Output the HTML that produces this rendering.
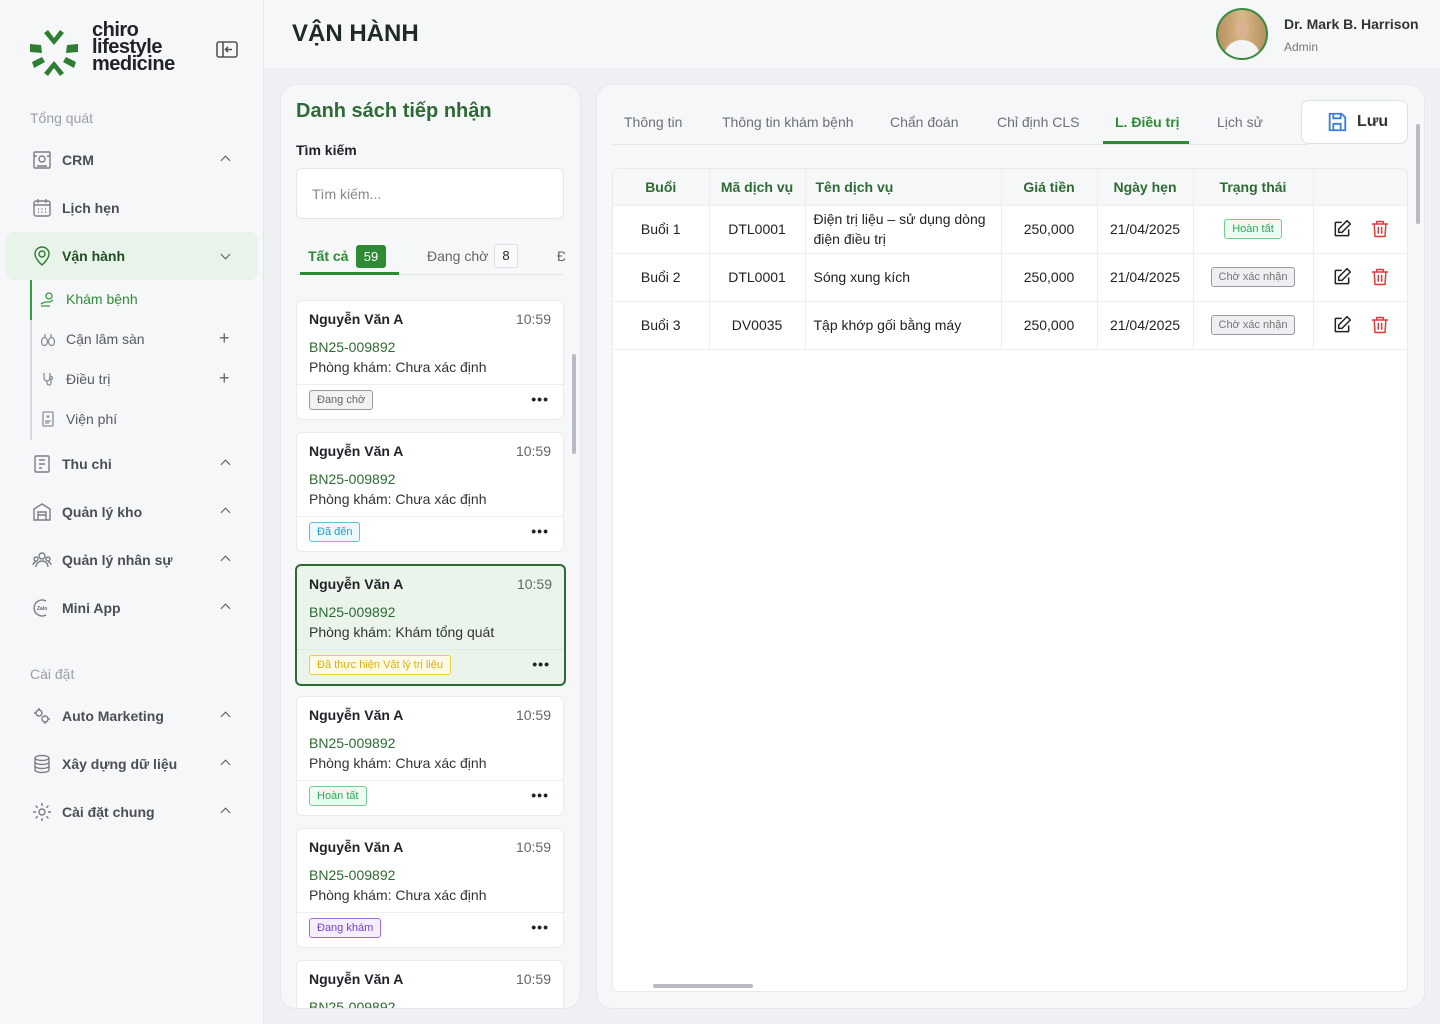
<!DOCTYPE html>
<html><head><meta charset="utf-8"><style>
*{box-sizing:border-box;margin:0;padding:0}
html,body{width:1440px;height:1024px;overflow:hidden}
body{background:#eef0f3;font-family:"Liberation Sans",sans-serif;color:#1f2328;position:relative}
.abs{position:absolute}
#side{left:0;top:0;width:264px;height:1024px;background:#f6f7f9;border-right:1px solid #e3e5e9}
.sec{position:absolute;left:30px;font-size:14px;color:#9aa0a8}
.mi{position:absolute;left:32px;font-size:14px;font-weight:bold;color:#4a4f57;display:flex;align-items:center;gap:10px}
.mi svg{width:20px;height:20px;fill:none;stroke:#7a7f87;stroke-width:1.4}
.chev{position:absolute;left:222px;width:7px;height:7px;border-left:1.6px solid #555;border-top:1.6px solid #555;transform:rotate(45deg)}
.sub{position:absolute;left:40px;font-size:14px;color:#555b63;display:flex;align-items:center;gap:10px}
.sub svg{width:16px;height:16px;fill:none;stroke:#8a8f97;stroke-width:1.3}
.plus{position:absolute;left:219px;font-size:18px;color:#666}
#hdr{left:264px;top:0;width:1176px;height:68px;background:#f6f7f9}
.panel{background:#f6f7f9;border:1px solid #e6e8eb;border-radius:16px}
.card{position:absolute;left:296px;width:268px;height:120px;background:#fff;border:1px solid #e8eaed;border-radius:6px}
.card .n{position:absolute;left:12px;top:10px;font-size:14px;font-weight:bold}
.card .t{position:absolute;right:12px;top:10px;font-size:14px;color:#666}
.card .id{position:absolute;left:12px;top:38px;font-size:14px;color:#2e6b34}
.card .r{position:absolute;left:12px;top:58px;font-size:14px;color:#333}
.card .dv{position:absolute;left:0;right:0;top:83px;border-top:1px solid #eceef0}
.card .b{position:absolute;left:12px;top:89px;font-size:11px;padding:3px 7px;border-radius:3px;border:1px solid}
.card .d{position:absolute;right:14px;top:90px;font-size:14px;letter-spacing:1px;font-weight:bold}
.tab{position:absolute;top:114px;font-size:14px;color:#6b7079}
table{border-collapse:collapse;font-size:14px}
td,th{border-right:1px solid #eceef0;border-bottom:1px solid #eceef0;text-align:center;padding:0}
th{height:36px;background:#f6f7f9;color:#2e6b34;font-size:14px}
td{height:48px;background:#fff;color:#222}
.bd{display:inline-block;font-size:11px;padding:3px 7px;border-radius:3px;border:1px solid}
.act svg{width:20px;height:20px;fill:none;stroke-width:1.8;stroke-linecap:round;stroke-linejoin:round;vertical-align:middle;margin:0 9px}
</style></head><body>
<div id="side" class="abs">
 <svg class="abs" style="left:28px;top:28px" width="52" height="50" viewBox="0 0 52 50"><g fill="#2e7d32"><path d="M20 2l6 8 6-8 4 3-10 12-10-12z"/><path d="M20 48l6-8 6 8 4-3-10-12-10 12z"/><path d="M2 16l11 1 1 8-12-1z"/><path d="M50 16l-11 1-1 8 12-1z"/><path d="M4 34l10-5 3 5-11 6z"/><path d="M48 34l-10-5-3 5 11 6z"/></g></svg>
 <div class="abs" style="left:92px;top:22px;font-size:20px;line-height:17px;font-weight:bold;letter-spacing:-0.5px">chiro<br>lifestyle<br>medicine</div>
 <svg class="abs" style="left:216px;top:41px" width="22" height="17" viewBox="0 0 22 17" fill="none" stroke="#555" stroke-width="1.6"><rect x="1" y="1" width="20" height="15" rx="2"/><path d="M7 1v15M16 8.5h-6M12 6l-2.5 2.5L12 11"/></svg>
 <div class="sec" style="top:110px">Tổng quát</div>
 <div class="mi" style="top:150px"><svg viewBox="0 0 20 20"><rect x="2" y="2" width="16" height="16" rx="1"/><circle cx="10" cy="9" r="3"/><path d="M5 16h10M2 6h3M15 6h3"/></svg>CRM</div><div class="chev" style="top:157px"></div>
 <div class="mi" style="top:198px"><svg viewBox="0 0 20 20"><rect x="2" y="3" width="16" height="15" rx="2"/><path d="M2 7h16M6 1v4M14 1v4M6 11h1M9.5 11h1M13 11h1M6 14h1M9.5 14h1M13 14h1"/></svg>Lịch hẹn</div>
 <div class="abs" style="left:6px;top:232px;width:252px;height:48px;background:#e8f3e9;border-radius:8px"></div>
 <div class="mi" style="top:246px;color:#1f4d24"><svg viewBox="0 0 20 20" style="stroke:#2e7d32"><path d="M10 19s-7-6-7-11a7 7 0 0114 0c0 5-7 11-7 11z"/><circle cx="10" cy="8" r="3"/></svg>Vận hành</div><div class="chev" style="top:251px;transform:rotate(225deg)"></div>
 <div class="abs" style="left:30px;top:280px;width:2px;height:160px;background:#d5d8dc"></div>
 <div class="abs" style="left:30px;top:280px;width:2px;height:40px;background:#3a9a40"></div>
 <div class="sub" style="top:291px;color:#2e8b34"><svg viewBox="0 0 16 16" style="stroke:#3a9a40"><circle cx="9" cy="5" r="3"/><path d="M1 13l4-2h5l3-2M1 15h9"/></svg>Khám bệnh</div>
 <div class="sub" style="top:331px"><svg viewBox="0 0 16 16"><path d="M5 3v4M11 3v4"/><ellipse cx="4.5" cy="10.5" rx="3" ry="4"/><ellipse cx="11.5" cy="10.5" rx="3" ry="4"/></svg>Cận lâm sàn</div><div class="plus" style="top:328px">+</div>
 <div class="sub" style="top:371px"><svg viewBox="0 0 16 16"><path d="M4 2v5a3 3 0 006 0V2M7 10v2a2 2 0 004 0V8"/><circle cx="11" cy="7" r="1.5"/></svg>Điều trị</div><div class="plus" style="top:368px">+</div>
 <div class="sub" style="top:411px"><svg viewBox="0 0 16 16"><rect x="3" y="1" width="10" height="14" rx="1"/><path d="M8 4v3M6.5 5.5h3M5 10h6M5 12h4"/></svg>Viện phí</div>
 <div class="mi" style="top:454px"><svg viewBox="0 0 20 20"><rect x="3" y="2" width="14" height="16" rx="1"/><path d="M7 6h6M7 10h6M7 14h3"/></svg>Thu chi</div><div class="chev" style="top:461px"></div>
 <div class="mi" style="top:502px"><svg viewBox="0 0 20 20"><path d="M2 18V7l8-5 8 5v11z"/><path d="M6 18v-8h8v8M6 13h8"/></svg>Quản lý kho</div><div class="chev" style="top:509px"></div>
 <div class="mi" style="top:550px"><svg viewBox="0 0 20 20"><circle cx="10" cy="6" r="3"/><circle cx="4" cy="9" r="2"/><circle cx="16" cy="9" r="2"/><path d="M4 17a6 6 0 0112 0M1 15a3 3 0 013-3M19 15a3 3 0 00-3-3"/></svg>Quản lý nhân sự</div><div class="chev" style="top:557px"></div>
 <div class="mi" style="top:598px"><svg viewBox="0 0 20 20"><path d="M14 3A8 8 0 1014 17"/><text x="5" y="12" font-size="5" fill="#666" stroke="none">Zalo</text></svg>Mini App</div><div class="chev" style="top:605px"></div>
 <div class="sec" style="top:666px">Cài đặt</div>
 <div class="mi" style="top:706px"><svg viewBox="0 0 20 20"><circle cx="7" cy="7" r="3"/><circle cx="13" cy="13" r="3"/><path d="M7 2v2M2 7h2M13 18v-2M18 13h-2"/></svg>Auto Marketing</div><div class="chev" style="top:713px"></div>
 <div class="mi" style="top:754px"><svg viewBox="0 0 20 20"><ellipse cx="10" cy="4" rx="7" ry="2.5"/><path d="M3 4v12c0 1.4 3 2.5 7 2.5s7-1.1 7-2.5V4M3 8c0 1.4 3 2.5 7 2.5S17 9.4 17 8M3 12c0 1.4 3 2.5 7 2.5s7-1.1 7-2.5"/></svg>Xây dựng dữ liệu</div><div class="chev" style="top:761px"></div>
 <div class="mi" style="top:802px"><svg viewBox="0 0 20 20"><circle cx="10" cy="10" r="3"/><path d="M10 1v3M10 16v3M1 10h3M16 10h3M3.6 3.6l2.1 2.1M14.3 14.3l2.1 2.1M3.6 16.4l2.1-2.1M14.3 5.7l2.1-2.1"/></svg>Cài đặt chung</div><div class="chev" style="top:809px"></div>
</div>
<div id="hdr" class="abs">
 <div class="abs" style="left:28px;top:20px;font-size:24px;font-weight:bold;color:#1e2a22">VẬN HÀNH</div>
 <div class="abs" style="left:952px;top:8px;width:52px;height:52px;border-radius:50%;border:2px solid #3a8a40;background:radial-gradient(ellipse 7px 9px at 50% 38%,#dcb090 90%,transparent 100%),radial-gradient(ellipse 18px 16px at 50% 95%,#f4f4f4 95%,transparent 100%),linear-gradient(90deg,#b89060,#d8b888,#b89060);"></div>
 <div class="abs" style="left:1020px;top:16px;font-size:14px;font-weight:bold;color:#333">Dr. Mark B. Harrison</div>
 <div class="abs" style="left:1020px;top:40px;font-size:12px;color:#777">Admin</div>
</div>
<div class="abs panel" style="left:280px;top:84px;width:301px;height:925px"></div>
<div class="abs" style="left:296px;top:100px;font-size:20px;font-weight:bold;color:#2e6b34">Danh sách tiếp nhận</div>
<div class="abs" style="left:296px;top:142px;font-size:14px;font-weight:bold">Tìm kiếm</div>
<div class="abs" style="left:296px;top:168px;width:268px;height:51px;background:#fff;border:1px solid #e3e5e8;border-radius:6px;padding:17px 15px;font-size:14px;color:#888">Tìm kiếm...</div>
<div class="abs" style="left:296px;top:274px;width:268px;border-top:1px solid #e3e5e8"></div>
<div class="abs" style="left:300px;top:272px;width:99px;height:3px;background:#2e8b34"></div>
<div class="abs" style="left:308px;top:248px;font-size:14px;font-weight:bold;color:#2e8b34">Tất cả</div>
<div class="abs" style="left:356px;top:245px;width:30px;height:23px;background:#2e8b34;color:#fff;font-size:13px;text-align:center;line-height:23px;border-radius:3px">59</div>
<div class="abs" style="left:427px;top:248px;font-size:14px;color:#666">Đang chờ</div>
<div class="abs" style="left:494px;top:244px;width:24px;height:24px;border:1px solid #dde0e3;font-size:13px;text-align:center;line-height:22px;border-radius:3px;background:#fafafa">8</div>
<div class="abs" style="left:557px;top:248px;width:8px;overflow:hidden;font-size:14px;color:#666">Đ</div>
<div class="abs" style="left:572px;top:354px;width:4px;height:100px;background:#b8bcc2;border-radius:2px"></div>
<div class="abs" style="left:288px;top:290px;width:282px;height:718px;overflow:hidden">
<div style="position:absolute;left:-288px;top:-290px;width:570px;height:1008px">
<div class="card" style="top:300px"><div class="n">Nguyễn Văn A</div><div class="t">10:59</div><div class="id">BN25-009892</div><div class="r">Phòng khám: Chưa xác định</div><div class="dv"></div><div class="b" style="color:#666;border-color:#999;background:#f2f2f4">Đang chờ</div><div class="d">•••</div></div>
<div class="card" style="top:432px"><div class="n">Nguyễn Văn A</div><div class="t">10:59</div><div class="id">BN25-009892</div><div class="r">Phòng khám: Chưa xác định</div><div class="dv"></div><div class="b" style="color:#1ea0c8;border-color:#5cc0e0;background:#eef9fd">Đã đến</div><div class="d">•••</div></div>
<div class="card" style="top:564px;background:#eaf4ea;border:2px solid #2e6b34;left:295px;width:271px;height:122px"><div class="n">Nguyễn Văn A</div><div class="t">10:59</div><div class="id">BN25-009892</div><div class="r">Phòng khám: Khám tổng quát</div><div class="dv" style="border-color:#dfe8df"></div><div class="b" style="color:#e0b000;border-color:#f3cc3a;background:#fffbe6">Đã thực hiện Vật lý trị liệu</div><div class="d">•••</div></div>
<div class="card" style="top:696px"><div class="n">Nguyễn Văn A</div><div class="t">10:59</div><div class="id">BN25-009892</div><div class="r">Phòng khám: Chưa xác định</div><div class="dv"></div><div class="b" style="color:#2ea85a;border-color:#6cd08e;background:#eefbf2">Hoàn tất</div><div class="d">•••</div></div>
<div class="card" style="top:828px"><div class="n">Nguyễn Văn A</div><div class="t">10:59</div><div class="id">BN25-009892</div><div class="r">Phòng khám: Chưa xác định</div><div class="dv"></div><div class="b" style="color:#7b3fd0;border-color:#9b6be0;background:#f4eefd">Đang khám</div><div class="d">•••</div></div>
<div class="card" style="top:960px"><div class="n">Nguyễn Văn A</div><div class="t">10:59</div><div class="id">BN25-009892</div></div>
</div></div>
<div class="abs panel" style="left:596px;top:84px;width:829px;height:925px"></div>
<div class="abs" style="left:612px;top:144px;width:698px;border-top:1px solid #e3e5e8"></div>
<div class="abs" style="left:1103px;top:141px;width:86px;height:3px;background:#2e8b34"></div>
<div class="tab" style="left:624px">Thông tin</div>
<div class="tab" style="left:722px">Thông tin khám bệnh</div>
<div class="tab" style="left:890px">Chẩn đoán</div>
<div class="tab" style="left:997px">Chỉ định CLS</div>
<div class="tab" style="left:1115px;color:#2e8b34;font-weight:bold">L. Điều trị</div>
<div class="tab" style="left:1217px">Lịch sử</div>
<div class="abs" style="left:1301px;top:100px;width:107px;height:44px;background:#fff;border:1px solid #dde0e4;border-radius:8px"></div>
<svg class="abs" style="left:1326px;top:111px" width="22" height="22" viewBox="0 0 24 24" fill="none" stroke="#3b7de0" stroke-width="2"><path d="M4 3h13l4 4v14H4z"/><path d="M8 3v5h8V3M8 21v-7h8v7"/></svg>
<div class="abs" style="left:1357px;top:113px;font-size:16px;font-weight:bold;color:#333">Lưu</div>
<div class="abs" style="left:1416px;top:124px;width:4px;height:100px;background:#b8bcc2;border-radius:2px"></div>
<div class="abs" style="left:612px;top:168px;width:796px;height:824px;background:#fff;border:1px solid #e8eaed;border-radius:6px;overflow:hidden">
<table style="width:796px;table-layout:fixed">
<tr><th style="width:96px">Buổi</th><th style="width:96px">Mã dịch vụ</th><th style="width:196px;text-align:left;padding-left:10px">Tên dịch vụ</th><th style="width:96px">Giá tiền</th><th style="width:96px">Ngày hẹn</th><th style="width:120px">Trạng thái</th><th style="border-right:0"></th></tr>
<tr><td>Buổi 1</td><td>DTL0001</td><td style="text-align:left;padding-left:8px;line-height:20px">Điện trị liệu – sử dụng dòng điện điều trị</td><td>250,000</td><td>21/04/2025</td><td><span class="bd" style="color:#2ea85a;border-color:#6cd08e;background:#eefbf2">Hoàn tất</span></td><td class="act" style="border-right:0"><svg viewBox="0 0 24 24" stroke="#222"><path d="M11 4H5a1 1 0 00-1 1v14a1 1 0 001 1h14a1 1 0 001-1v-6"/><path d="M18 2l4 4-10 10H8v-4z"/></svg><svg viewBox="0 0 24 24" stroke="#e53935"><path d="M3 6h18M8 6V3h8v3M5 6l1 15h12l1-15M10 10v7M14 10v7"/></svg></td></tr>
<tr><td>Buổi 2</td><td>DTL0001</td><td style="text-align:left;padding-left:8px">Sóng xung kích</td><td>250,000</td><td>21/04/2025</td><td><span class="bd" style="color:#777;border-color:#999;background:#eeeef3">Chờ xác nhận</span></td><td class="act" style="border-right:0"><svg viewBox="0 0 24 24" stroke="#222"><path d="M11 4H5a1 1 0 00-1 1v14a1 1 0 001 1h14a1 1 0 001-1v-6"/><path d="M18 2l4 4-10 10H8v-4z"/></svg><svg viewBox="0 0 24 24" stroke="#e53935"><path d="M3 6h18M8 6V3h8v3M5 6l1 15h12l1-15M10 10v7M14 10v7"/></svg></td></tr>
<tr><td>Buổi 3</td><td>DV0035</td><td style="text-align:left;padding-left:8px">Tập khớp gối bằng máy</td><td>250,000</td><td>21/04/2025</td><td><span class="bd" style="color:#777;border-color:#999;background:#eeeef3">Chờ xác nhận</span></td><td class="act" style="border-right:0"><svg viewBox="0 0 24 24" stroke="#222"><path d="M11 4H5a1 1 0 00-1 1v14a1 1 0 001 1h14a1 1 0 001-1v-6"/><path d="M18 2l4 4-10 10H8v-4z"/></svg><svg viewBox="0 0 24 24" stroke="#e53935"><path d="M3 6h18M8 6V3h8v3M5 6l1 15h12l1-15M10 10v7M14 10v7"/></svg></td></tr>
</table>
<div class="abs" style="left:40px;top:815px;width:100px;height:4px;background:#b8bcc2;border-radius:2px"></div>
</div>
</body></html>
